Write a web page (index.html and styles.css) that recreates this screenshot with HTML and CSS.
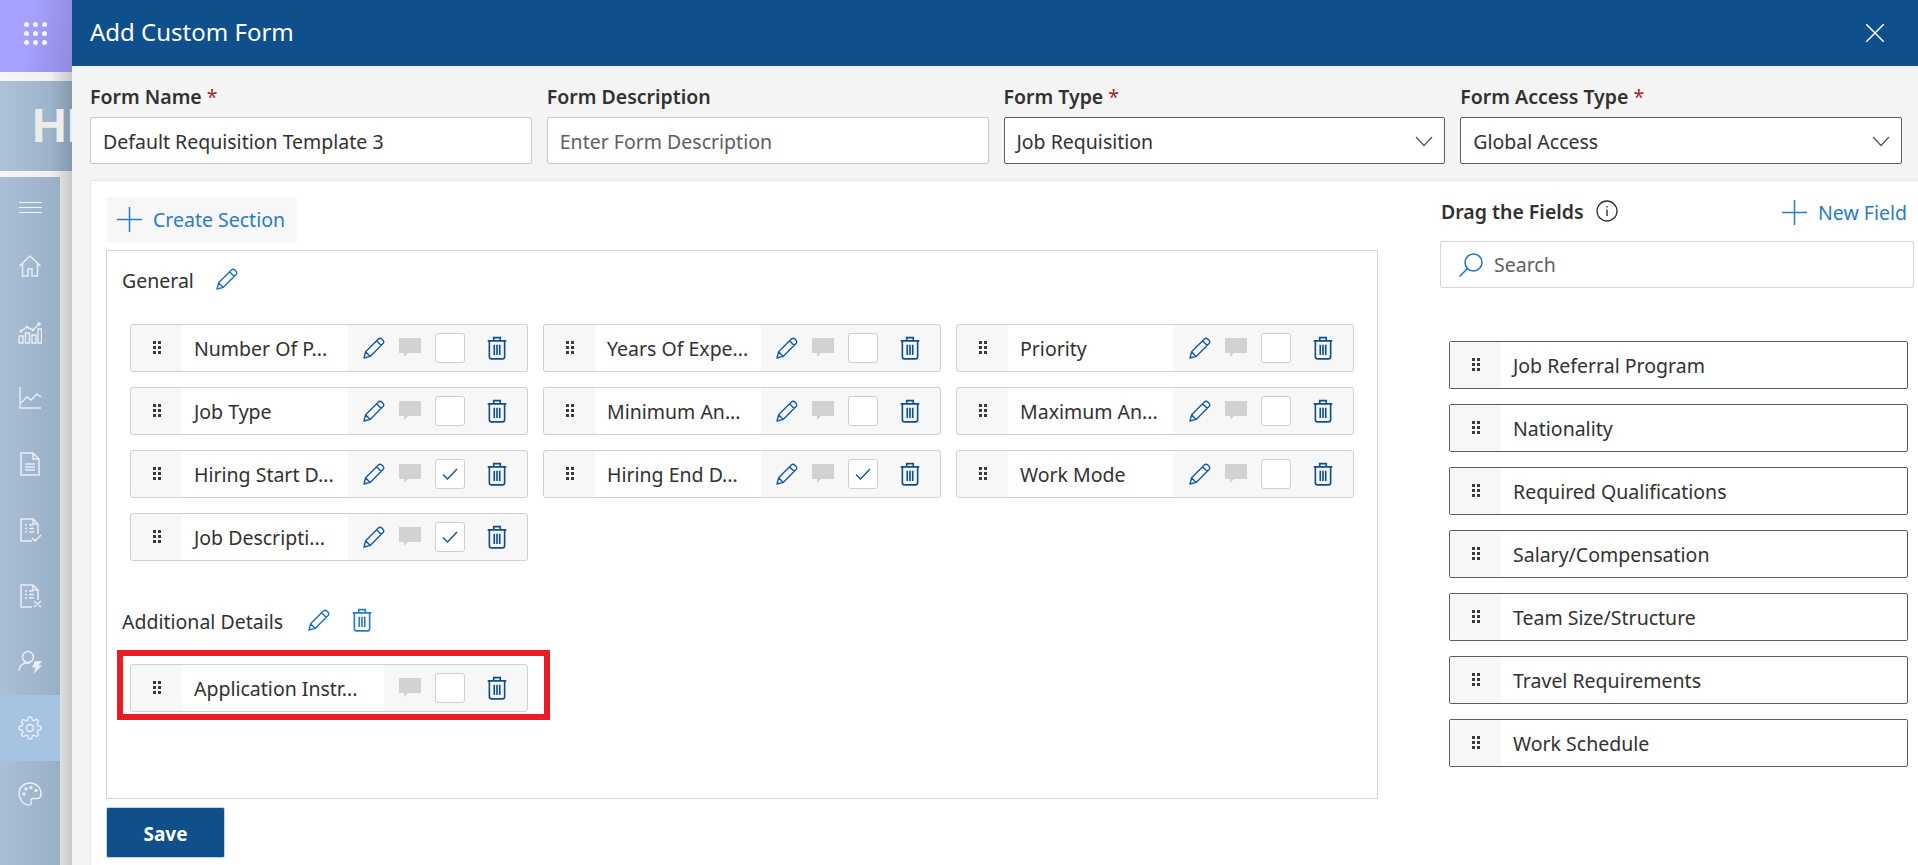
FILE: index.html
```html
<!DOCTYPE html>
<html lang="en">
<head>
  <meta charset="UTF-8">
  <title>Add Custom Form</title>
  <link rel="stylesheet" href="styles.css">
</head>
<body>
  <svg class="sprite" xmlns="http://www.w3.org/2000/svg">
    <symbol id="i-pencil" viewBox="0 0 22 22"><path d="M1 21l1.6-6.2L15.4 2a2.4 2.4 0 0 1 3.4 0l1.2 1.2a2.4 2.4 0 0 1 0 3.4L7.2 19.4zM2.6 14.8l4.6 4.6M13.6 3.8l4.6 4.6" fill="none" stroke="currentColor" stroke-width="1.4" stroke-linejoin="round"/></symbol>
    <symbol id="i-comment" viewBox="0 0 22 19"><path d="M0 0h22v15H9l-4 4v-4H0z" fill="#d2d2d2"/></symbol>
    <symbol id="i-trash" viewBox="0 0 18 22"><path d="M.5 4.500h17M6 4.500V1.500h6v3M2 4.500v14.500a2 2 0 0 0 2 2h10a2 2 0 0 0 2-2V4.500M6.500 8v9.500M9 8v9.500M11.500 8v9.500" fill="none" stroke="currentColor" stroke-width="1.500"/></symbol>
    <symbol id="i-check" viewBox="0 0 16 14"><path d="M1 7.500l4.500 4.500L15 2" fill="none" stroke="#0f4f8b" stroke-width="1.300"/></symbol>
    <symbol id="i-plus" viewBox="0 0 25 25"><path d="M12.500 0v25M0 12.500h25" fill="none" stroke="currentColor" stroke-width="1.500"/></symbol>
    <symbol id="i-chevron" viewBox="0 0 18 11"><path d="M1 1l8 8.500L17 1" fill="none" stroke="#555" stroke-width="1.200"/></symbol>
    <symbol id="i-grip" viewBox="0 0 8 13"><path d="M0 0h3v3H0zM5 0h3v3H5zM0 5h3v3H0zM5 5h3v3H5zM0 10h3v3H0zM5 10h3v3H5z" fill="#3a3a3a"/></symbol>
    <symbol id="i-home" viewBox="0 0 24 24"><path d="M1.500 12L12 2l10.500 10M4.500 9.500V22h5.500v-7h4v7h5.500V9.500" fill="none" stroke="currentColor" stroke-width="1.500"/></symbol>
    <symbol id="i-bars" viewBox="0 0 24 24"><path d="M1 16h4v7H1zM7.500 13h4v10h-4zM14 15h4v8h-4zM20 9h3.500v14H20zM3 11l6-4 6 3 6-6" fill="none" stroke="currentColor" stroke-width="1.400"/><circle cx="3" cy="11" r="1.500" fill="currentColor"/><circle cx="9" cy="7" r="1.500" fill="currentColor"/><circle cx="15" cy="10" r="1.500" fill="currentColor"/><circle cx="21" cy="4" r="1.800" fill="currentColor"/></symbol>
    <symbol id="i-line" viewBox="0 0 24 24"><path d="M2 1v21h21M3 17l6-6 4 3 6-6 4 3" fill="none" stroke="currentColor" stroke-width="1.400"/></symbol>
    <symbol id="i-doc" viewBox="0 0 24 24"><path d="M3 1h12l6 6v16H3zM15 1v6h6M7 12h10M7 15h10M7 18h10" fill="none" stroke="currentColor" stroke-width="1.500"/></symbol>
    <symbol id="i-doc-check" viewBox="0 0 24 24"><path d="M14 23H3V1h12l5 5v10M15 1v5h5M7 7h2M11 7h4M7 10.500h2M11 10.500h5M7 14h2M11 14h5M14 20l3 3 6-6" fill="none" stroke="currentColor" stroke-width="1.500"/></symbol>
    <symbol id="i-doc-x" viewBox="0 0 24 24"><path d="M14 23H3V1h12l5 5v10M15 1v5h5M7 7h2M11 7h4M7 10.500h2M11 10.500h5M7 14h2M11 14h5M16 17l7 6M23 17l-7 6" fill="none" stroke="currentColor" stroke-width="1.500"/></symbol>
    <symbol id="i-user" viewBox="0 0 24 24"><circle cx="10" cy="7" r="5.500" fill="none" stroke="currentColor" stroke-width="1.500"/><path d="M1 21c0-5 3.500-8 8-8h3" fill="none" stroke="currentColor" stroke-width="1.500"/><path d="M17 11h7l-3.500 4.500H24L15.500 24l2-6.500H14z" fill="currentColor"/></symbol>
    <symbol id="i-gear" viewBox="0 0 24 24"><circle cx="12" cy="12" r="3.500" fill="none" stroke="currentColor" stroke-width="1.500"/><path d="M19.400 15a1.650 1.650 0 0 0 .33 1.820l.06.06a2 2 0 0 1 0 2.830 2 2 0 0 1-2.830 0l-.06-.06a1.650 1.650 0 0 0-1.820-.33 1.650 1.650 0 0 0-1 1.510V21a2 2 0 0 1-2 2 2 2 0 0 1-2-2v-.09A1.650 1.650 0 0 0 9 19.400a1.650 1.650 0 0 0-1.820.33l-.06.06a2 2 0 0 1-2.830 0 2 2 0 0 1 0-2.830l.06-.06a1.650 1.650 0 0 0 .33-1.820 1.650 1.650 0 0 0-1.510-1H3a2 2 0 0 1-2-2 2 2 0 0 1 2-2h.09A1.650 1.650 0 0 0 4.600 9a1.650 1.650 0 0 0-.33-1.820l-.06-.06a2 2 0 0 1 0-2.830 2 2 0 0 1 2.830 0l.06.06a1.650 1.650 0 0 0 1.820.33H9a1.650 1.650 0 0 0 1-1.510V3a2 2 0 0 1 2-2 2 2 0 0 1 2 2v.09a1.650 1.650 0 0 0 1 1.510 1.650 1.650 0 0 0 1.820-.33l.06-.06a2 2 0 0 1 2.830 0 2 2 0 0 1 0 2.830l-.06.06a1.650 1.650 0 0 0-.33 1.820V9a1.650 1.650 0 0 0 1.510 1H21a2 2 0 0 1 2 2 2 2 0 0 1-2 2h-.09a1.650 1.650 0 0 0-1.510 1z" fill="none" stroke="currentColor" stroke-width="1.500"/></symbol>
    <symbol id="i-palette" viewBox="0 0 24 24"><path d="M12 1C5.500 1 1 5.800 1 11.500S5.500 23 11 23c2.500 0 2.800-1.600 2-3-1-1.800 0-3.500 2-3.500h4c2.500 0 4-1.800 4-4.500C23 5.500 18 1 12 1z" fill="none" stroke="currentColor" stroke-width="1.500"/><circle cx="6" cy="12" r="1.700" fill="currentColor"/><circle cx="8" cy="7" r="1.700" fill="currentColor"/><circle cx="13" cy="5.500" r="1.700" fill="currentColor"/><circle cx="18" cy="8.500" r="1.700" fill="currentColor"/></symbol>
  </svg>

  <div class="app">
    <aside class="side">
      <div class="waffle">
        <div class="waffle-dots">
          <span></span><span></span><span></span><span></span><span></span><span></span><span></span><span></span><span></span>
        </div>
      </div>
      <div class="brand"><span class="brand-text">HI</span></div>
      <nav class="nav">
        <div class="nav-item burger-item"><div class="burger"><span></span><span></span><span></span></div></div>
        <div class="nav-item"><svg class="nav-icon"><use href="#i-home"/></svg></div>
        <div class="nav-item"><svg class="nav-icon"><use href="#i-bars"/></svg></div>
        <div class="nav-item"><svg class="nav-icon"><use href="#i-line"/></svg></div>
        <div class="nav-item"><svg class="nav-icon"><use href="#i-doc"/></svg></div>
        <div class="nav-item"><svg class="nav-icon"><use href="#i-doc-check"/></svg></div>
        <div class="nav-item"><svg class="nav-icon"><use href="#i-doc-x"/></svg></div>
        <div class="nav-item"><svg class="nav-icon"><use href="#i-user"/></svg></div>
        <div class="nav-item active"><svg class="nav-icon"><use href="#i-gear"/></svg></div>
        <div class="nav-item"><svg class="nav-icon"><use href="#i-palette"/></svg></div>
      </nav>
    </aside>

    <div class="panel">
      <header class="panel-head">
        <h1>Add Custom Form</h1>
        <svg class="close" viewBox="0 0 18 18"><path d="M0 0l18 18M18 0L0 18" stroke="#fff" stroke-width="1.500"/></svg>
      </header>

      <div class="top-fields">
        <div class="top-field">
          <label>Form Name <em>*</em></label>
          <div class="input">Default Requisition Template 3</div>
        </div>
        <div class="top-field">
          <label>Form Description</label>
          <div class="input placeholder">Enter Form Description</div>
        </div>
        <div class="top-field">
          <label>Form Type <em>*</em></label>
          <div class="input select">Job Requisition<svg class="chevron"><use href="#i-chevron"/></svg></div>
        </div>
        <div class="top-field">
          <label>Form Access Type <em>*</em></label>
          <div class="input select">Global Access<svg class="chevron"><use href="#i-chevron"/></svg></div>
        </div>
      </div>

      <main class="body">
        <section class="builder">
          <div class="create-btn"><svg class="plus"><use href="#i-plus"/></svg>Create Section</div>
          <div class="sections">
            <div class="section-title first">General <svg class="pencil"><use href="#i-pencil"/></svg></div>
            <div class="field-grid">
              <div class="field"><div class="grip"><svg><use href="#i-grip"/></svg></div><div class="field-name">Number Of P...</div><div class="field-tools"><svg class="pencil"><use href="#i-pencil"/></svg><svg class="comment"><use href="#i-comment"/></svg><span class="box"></span><svg class="trash"><use href="#i-trash"/></svg></div></div>
              <div class="field"><div class="grip"><svg><use href="#i-grip"/></svg></div><div class="field-name">Years Of Expe...</div><div class="field-tools"><svg class="pencil"><use href="#i-pencil"/></svg><svg class="comment"><use href="#i-comment"/></svg><span class="box"></span><svg class="trash"><use href="#i-trash"/></svg></div></div>
              <div class="field"><div class="grip"><svg><use href="#i-grip"/></svg></div><div class="field-name">Priority</div><div class="field-tools"><svg class="pencil"><use href="#i-pencil"/></svg><svg class="comment"><use href="#i-comment"/></svg><span class="box"></span><svg class="trash"><use href="#i-trash"/></svg></div></div>
              <div class="field"><div class="grip"><svg><use href="#i-grip"/></svg></div><div class="field-name">Job Type</div><div class="field-tools"><svg class="pencil"><use href="#i-pencil"/></svg><svg class="comment"><use href="#i-comment"/></svg><span class="box"></span><svg class="trash"><use href="#i-trash"/></svg></div></div>
              <div class="field"><div class="grip"><svg><use href="#i-grip"/></svg></div><div class="field-name">Minimum An...</div><div class="field-tools"><svg class="pencil"><use href="#i-pencil"/></svg><svg class="comment"><use href="#i-comment"/></svg><span class="box"></span><svg class="trash"><use href="#i-trash"/></svg></div></div>
              <div class="field"><div class="grip"><svg><use href="#i-grip"/></svg></div><div class="field-name">Maximum An...</div><div class="field-tools"><svg class="pencil"><use href="#i-pencil"/></svg><svg class="comment"><use href="#i-comment"/></svg><span class="box"></span><svg class="trash"><use href="#i-trash"/></svg></div></div>
              <div class="field"><div class="grip"><svg><use href="#i-grip"/></svg></div><div class="field-name">Hiring Start D...</div><div class="field-tools"><svg class="pencil"><use href="#i-pencil"/></svg><svg class="comment"><use href="#i-comment"/></svg><span class="box"><svg class="check"><use href="#i-check"/></svg></span><svg class="trash"><use href="#i-trash"/></svg></div></div>
              <div class="field"><div class="grip"><svg><use href="#i-grip"/></svg></div><div class="field-name">Hiring End D...</div><div class="field-tools"><svg class="pencil"><use href="#i-pencil"/></svg><svg class="comment"><use href="#i-comment"/></svg><span class="box"><svg class="check"><use href="#i-check"/></svg></span><svg class="trash"><use href="#i-trash"/></svg></div></div>
              <div class="field"><div class="grip"><svg><use href="#i-grip"/></svg></div><div class="field-name">Work Mode</div><div class="field-tools"><svg class="pencil"><use href="#i-pencil"/></svg><svg class="comment"><use href="#i-comment"/></svg><span class="box"></span><svg class="trash"><use href="#i-trash"/></svg></div></div>
              <div class="field"><div class="grip"><svg><use href="#i-grip"/></svg></div><div class="field-name">Job Descripti...</div><div class="field-tools"><svg class="pencil"><use href="#i-pencil"/></svg><svg class="comment"><use href="#i-comment"/></svg><span class="box"><svg class="check"><use href="#i-check"/></svg></span><svg class="trash"><use href="#i-trash"/></svg></div></div>
            </div>

            <div class="section-title second">Additional Details <svg class="pencil"><use href="#i-pencil"/></svg><svg class="trash light"><use href="#i-trash"/></svg></div>
            <div class="highlight">
              <div class="field"><div class="grip"><svg><use href="#i-grip"/></svg></div><div class="field-name wide">Application Instr...</div><div class="field-tools"><svg class="comment first-tool"><use href="#i-comment"/></svg><span class="box"></span><svg class="trash"><use href="#i-trash"/></svg></div></div>
            </div>
          </div>
          <button class="save" type="button">Save</button>
        </section>

        <aside class="fields-col">
          <div class="drag-head">
            <span class="drag-title">Drag the Fields</span>
            <svg class="info" viewBox="0 0 22 22"><circle cx="11" cy="11" r="10" fill="none" stroke="#323130" stroke-width="1.300"/><path d="M11 9.500v6.500M11 6v1.600" stroke="#323130" stroke-width="1.400"/></svg>
            <span class="new-field"><svg class="plus"><use href="#i-plus"/></svg>New Field</span>
          </div>
          <div class="search">
            <svg class="search-icon" viewBox="0 0 24 24"><circle cx="14.500" cy="9.500" r="8.500" fill="none" stroke="#1f6fbd" stroke-width="1.500"/><path d="M8.500 15.500L.5 23.500" stroke="#1f6fbd" stroke-width="1.500"/></svg>
            Search
          </div>
          <div class="avail-list">
            <div class="avail"><div class="grip"><svg><use href="#i-grip"/></svg></div><div class="avail-name">Job Referral Program</div></div>
            <div class="avail"><div class="grip"><svg><use href="#i-grip"/></svg></div><div class="avail-name">Nationality</div></div>
            <div class="avail"><div class="grip"><svg><use href="#i-grip"/></svg></div><div class="avail-name">Required Qualifications</div></div>
            <div class="avail"><div class="grip"><svg><use href="#i-grip"/></svg></div><div class="avail-name">Salary/Compensation</div></div>
            <div class="avail"><div class="grip"><svg><use href="#i-grip"/></svg></div><div class="avail-name">Team Size/Structure</div></div>
            <div class="avail"><div class="grip"><svg><use href="#i-grip"/></svg></div><div class="avail-name">Travel Requirements</div></div>
            <div class="avail"><div class="grip"><svg><use href="#i-grip"/></svg></div><div class="avail-name">Work Schedule</div></div>
          </div>
        </aside>
      </main>
    </div>
  </div>
</body>
</html>
```

FILE: styles.css
```css
* {
  box-sizing: border-box;
}

html, body {
  margin: 0;
  height: 100%;
  overflow: hidden;
}

body {
  font-family: "Noto Sans", "Open Sans", sans-serif;
  font-size: 19.5px;
  color: #323130;
  background: #fff;
}

.sprite {
  display: none;
}

.app {
  display: flex;
  height: 865px;
}

/* dimmed page behind the panel */
.side {
  width: 72px;
  flex: none;
  display: flex;
  flex-direction: column;
  background: linear-gradient(to right, #f6f6f6, #f0f0f0 70%, #c9c9c9);
  overflow: hidden;
}

.waffle {
  height: 72px;
  flex: none;
  padding: 22px 0 0 24px;
  background: linear-gradient(100deg, #a5a1ff 40%, #8f8bdd);
}

.waffle-dots {
  display: grid;
  grid-template-columns: repeat(3, 5px);
  gap: 4px;
}

.waffle-dots span {
  width: 5px;
  height: 5px;
  border-radius: 50%;
  background: #f2f2f8;
}

.brand {
  height: 90px;
  margin-top: 9px;
  flex: none;
  padding: 17px 0 0 32px;
  background: linear-gradient(to right, #adc3d8, #9db3ca 70%, #8499ad);
  white-space: nowrap;
  overflow: hidden;
}

.brand-text {
  font-family: "Liberation Sans", sans-serif;
  font-size: 48px;
  font-weight: 700;
  color: #ececec;
}

.nav {
  margin-top: 6px;
  width: 60px;
  flex: 1;
  background: linear-gradient(to right, #a9c0d6, #98afc6);
}

.nav-item {
  height: 66px;
  display: flex;
  align-items: center;
  justify-content: center;
  color: #e9eef3;
}

.nav-item.active {
  background: #a6c4e1;
}

.burger-item {
  height: 56px;
  padding-top: 4px;
}

.nav-icon {
  width: 24px;
  height: 24px;
}

.burger {
  width: 23px;
}

.burger span {
  display: block;
  height: 1px;
  margin: 4px 0;
  background: #f2f5f8;
}

/* panel */
.panel {
  flex: 1;
  min-width: 0;
  display: flex;
  flex-direction: column;
  background: #f4f4f4;
}

.panel-head {
  height: 66px;
  flex: none;
  display: flex;
  align-items: center;
  justify-content: space-between;
  padding: 0 34px 0 18px;
  background: #0f4f8b;
}

.panel-head h1 {
  margin: 0 0 4px;
  font-size: 24px;
  font-weight: 400;
  color: #fff;
}

.close {
  width: 18px;
  height: 18px;
}

.top-fields {
  display: grid;
  grid-template-columns: repeat(4, 1fr);
  column-gap: 15px;
  padding: 19px 16px 0 18px;
  height: 114px;
  flex: none;
}

.top-field label {
  display: block;
  height: 32px;
  font-size: 19.5px;
  font-weight: 600;
  line-height: 24px;
}

.top-field em {
  font-style: normal;
  font-weight: 400;
  color: #a4262c;
}

.input {
  height: 47px;
  padding: 1px 12px 0;
  display: flex;
  align-items: center;
  justify-content: space-between;
  background: #fff;
  border: 1px solid #c8c8c8;
  border-radius: 2px;
  white-space: nowrap;
}

.placeholder {
  color: #605e5c;
}

.select {
  border-color: #605e5c;
}

.chevron {
  width: 18px;
  height: 11px;
  margin-right: -1px;
}

.body {
  flex: 1;
  min-height: 0;
  display: flex;
  margin-left: 18px;
  background: #fff;
  border-top: 1px solid #e6e6e6;
  border-left: 1px solid #e6e6e6;
}

.builder {
  width: 1350px;
  flex: none;
  padding: 16px 0 0 15px;
}

.create-btn {
  width: 191px;
  height: 45px;
  display: flex;
  align-items: center;
  gap: 11px;
  padding-left: 11px;
  background: #f7f7f7;
  color: #2b7bc4;
  white-space: nowrap;
}

.plus {
  width: 25px;
  height: 25px;
  color: #2b7bc4;
}

.sections {
  width: 1272px;
  height: 549px;
  margin-top: 8px;
  padding: 0 0 0 10px;
  border: 1px solid #d4d4d4;
}

.section-title {
  display: flex;
  align-items: center;
  height: 24px;
  padding-left: 5px;
}

.section-title.first {
  margin-top: 17px;
}

.section-title.second {
  margin-top: 48px;
}

.section-title .pencil {
  margin-left: 22px;
  margin-bottom: 2px;
  color: #1f6fbd;
}

.section-title.second .pencil {
  margin-left: 25px;
}

.section-title .trash {
  margin-left: 22px;
  margin-bottom: 2px;
}

.section-title .light {
  color: #2b7bc4;
}

.field-grid {
  display: grid;
  grid-template-columns: repeat(3, 398px);
  gap: 15px;
  margin: 32px 0 0 13px;
}

.field {
  width: 398px;
  height: 48px;
  display: flex;
  background: #f7f7f7;
  border: 1px solid #d0d0d0;
  border-radius: 3px;
}

.grip {
  width: 51px;
  flex: none;
  display: flex;
  align-items: center;
  justify-content: center;
  padding-bottom: 1px;
}

.grip svg {
  width: 8px;
  height: 13px;
}

.field-name {
  width: 166px;
  flex: none;
  padding: 1px 0 0 12px;
  line-height: 46px;
  background: #fff;
  white-space: nowrap;
  overflow: hidden;
}

.field-name.wide {
  width: 202px;
}

.field-tools {
  flex: 1;
  display: flex;
  align-items: center;
  padding-left: 15px;
  padding-bottom: 1px;
}

.pencil {
  width: 22px;
  height: 22px;
  flex: none;
  color: #175a9c;
}

.comment {
  width: 22px;
  height: 19px;
  margin-left: 14px;
  flex: none;
}

.comment.first-tool {
  margin-left: 0;
}

.box {
  width: 30px;
  height: 30px;
  margin-left: 14px;
  flex: none;
  display: flex;
  align-items: center;
  justify-content: center;
  background: #fff;
  border: 1px solid #cfcfcf;
  border-radius: 3px;
}

.check {
  width: 16px;
  height: 14px;
}

.trash {
  width: 20px;
  height: 24px;
  margin-left: 22px;
  flex: none;
  color: #0f4f8b;
}

.highlight {
  width: 433px;
  height: 70px;
  margin-top: 17px;
  padding: 8px 0 0 7px;
  border: 6px solid #ec1c24;
}

.save {
  display: block;
  width: 119px;
  height: 51px;
  margin-top: 8px;
  padding-top: 4px;
  font-family: inherit;
  font-size: 19px;
  font-weight: 700;
  color: #fff;
  background: #0f4f8b;
  border: 1px solid #c8d4e0;
  border-radius: 2px;
}

/* right column */
.fields-col {
  flex: 1;
  min-width: 0;
  padding-top: 16px;
}

.drag-head {
  display: flex;
  align-items: center;
  height: 28px;
  margin-right: 11px;
}

.drag-title {
  font-weight: 600;
}

.info {
  width: 22px;
  height: 22px;
  margin-left: 12px;
  margin-bottom: 1px;
}

.new-field {
  margin-left: auto;
  padding-top: 3px;
  display: flex;
  align-items: center;
  gap: 11px;
  color: #2b7bc4;
}

.search {
  display: flex;
  align-items: center;
  gap: 11px;
  height: 47px;
  margin: 16px 4px 0 -1px;
  padding-left: 18px;
  color: #605e5c;
  border: 1px solid #d4d4d4;
  border-radius: 2px;
}

.search-icon {
  width: 24px;
  height: 24px;
}

.avail-list {
  display: flex;
  flex-direction: column;
  gap: 15px;
  margin: 53px 10px 0 8px;
}

.avail {
  height: 48px;
  display: flex;
  border: 1px solid #605e5c;
  border-radius: 2px;
}

.avail .grip {
  background: #f7f7f7;
}

.avail-name {
  flex: 1;
  padding: 1px 0 0 12px;
  line-height: 46px;
}
```
